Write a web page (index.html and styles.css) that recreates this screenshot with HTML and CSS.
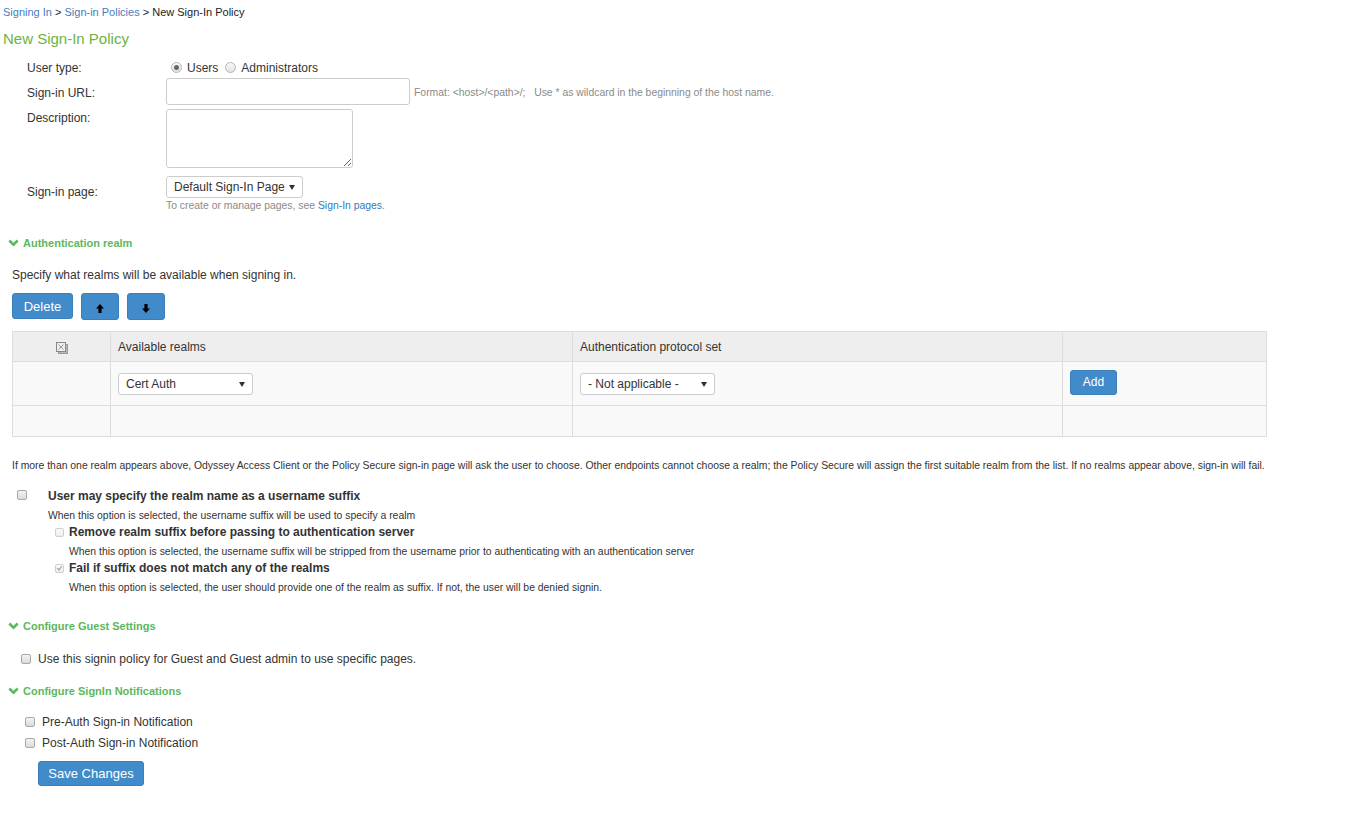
FILE: index.html
```html
<!DOCTYPE html>
<html lang="en">
<head>
    <meta charset="UTF-8">
    <title>New Sign-In Policy</title>
    <link rel="stylesheet" href="styles.css">
</head>
<body>
    <div class="breadcrumb">
        <a href="#">Signing In</a> &gt; <a href="#">Sign-in Policies</a> &gt; New Sign-In Policy
    </div>

    <h1 class="page-title">New Sign-In Policy</h1>

    <div class="policy-form">
        <div class="form-row row-type">
            <div class="form-label">User type:</div>
            <div class="form-field radios">
                <label><span class="radio checked"></span>Users</label>
                <label><span class="radio"></span>Administrators</label>
            </div>
        </div>
        <div class="form-row row-url">
            <div class="form-label">Sign-in URL:</div>
            <div class="form-field inline">
                <input type="text" class="text-input url-input">
                <span class="hint">Format: &lt;host&gt;/&lt;path&gt;/;&nbsp;&nbsp; Use * as wildcard in the beginning of the host name.</span>
            </div>
        </div>
        <div class="form-row row-desc">
            <div class="form-label">Description:</div>
            <div class="form-field">
                <textarea class="text-input desc-input"></textarea>
            </div>
        </div>
        <div class="form-row row-page">
            <div class="form-label">Sign-in page:</div>
            <div class="form-field">
                <div class="select-box page-select">Default Sign-In Page</div>
                <div class="hint page-hint">To create or manage pages, see <a href="#">Sign-In pages</a>.</div>
            </div>
        </div>
    </div>

    <div class="section-head realm-head">
        <svg class="chevron" width="11" height="8" viewBox="0 0 11 8"><polyline points="1.3,1.5 5.5,5.7 9.7,1.5" fill="none" stroke="#5cb85c" stroke-width="2.6"/></svg>
        Authentication realm
    </div>

    <p class="realm-intro">Specify what realms will be available when signing in.</p>

    <div class="toolbar">
        <button class="btn btn-delete">Delete</button>
        <button class="btn btn-arrow">
            <svg width="8" height="9" viewBox="0 0 8 9"><path d="M4 0 L8 4.5 H5.6 V9 H2.4 V4.5 H0 Z" fill="#000"/></svg>
        </button>
        <button class="btn btn-arrow">
            <svg width="8" height="9" viewBox="0 0 8 9"><path d="M4 9 L8 4.5 H5.6 V0 H2.4 V4.5 H0 Z" fill="#000"/></svg>
        </button>
    </div>

    <table class="realm-table">
        <tr class="head-row">
            <th class="col-check">
                <svg width="12" height="12" viewBox="0 0 12 12">
                    <rect x="2.5" y="2.5" width="9" height="9" fill="#bbb" stroke="#999"/>
                    <rect x="0.5" y="0.5" width="9" height="9" fill="#eee" stroke="#888"/>
                    <path d="M2.5 2.5 L7.5 7.5 M7.5 2.5 L2.5 7.5" stroke="#999" stroke-width="1"/>
                </svg>
            </th>
            <th class="col-realm">Available realms</th>
            <th class="col-proto">Authentication protocol set</th>
            <th class="col-add"></th>
        </tr>
        <tr class="edit-row">
            <td></td>
            <td><div class="select-box realm-select">Cert Auth</div></td>
            <td><div class="select-box proto-select">- Not applicable -</div></td>
            <td><button class="btn btn-add">Add</button></td>
        </tr>
        <tr class="empty-row">
            <td></td><td></td><td></td><td></td>
        </tr>
    </table>

    <p class="realm-note">If more than one realm appears above, Odyssey Access Client or the Policy Secure sign-in page will ask the user to choose. Other endpoints cannot choose a realm; the Policy Secure will assign the first suitable realm from the list. If no realms appear above, sign-in will fail.</p>

    <div class="suffix-options">
        <div class="option main-option">
            <span class="checkbox"></span>
            <div class="option-text">
                <div class="option-title">User may specify the realm name as a username suffix</div>
                <div class="option-help">When this option is selected, the username suffix will be used to specify a realm</div>
            </div>
        </div>
        <div class="option sub-option">
            <span class="checkbox disabled"></span>
            <div class="option-text">
                <div class="option-title">Remove realm suffix before passing to authentication server</div>
                <div class="option-help">When this option is selected, the username suffix will be stripped from the username prior to authenticating with an authentication server</div>
            </div>
        </div>
        <div class="option sub-option">
            <span class="checkbox disabled checked"></span>
            <div class="option-text">
                <div class="option-title">Fail if suffix does not match any of the realms</div>
                <div class="option-help">When this option is selected, the user should provide one of the realm as suffix. If not, the user will be denied signin.</div>
            </div>
        </div>
    </div>

    <div class="section-head guest-head">
        <svg class="chevron" width="11" height="8" viewBox="0 0 11 8"><polyline points="1.3,1.5 5.5,5.7 9.7,1.5" fill="none" stroke="#5cb85c" stroke-width="2.6"/></svg>
        Configure Guest Settings
    </div>

    <label class="check-line guest-line"><span class="checkbox"></span>Use this signin policy for Guest and Guest admin to use specific pages.</label>

    <div class="section-head notify-head">
        <svg class="chevron" width="11" height="8" viewBox="0 0 11 8"><polyline points="1.3,1.5 5.5,5.7 9.7,1.5" fill="none" stroke="#5cb85c" stroke-width="2.6"/></svg>
        Configure SignIn Notifications
    </div>

    <div class="notify-list">
        <label class="check-line"><span class="checkbox"></span>Pre-Auth Sign-in Notification</label>
        <label class="check-line"><span class="checkbox"></span>Post-Auth Sign-in Notification</label>
    </div>

    <button class="btn btn-save">Save Changes</button>
</body>
</html>
```

FILE: styles.css
```css
body {
    margin: 0;
    font-family: "Liberation Sans", Arial, sans-serif;
    font-size: 12px;
    color: #333;
    background: #fff;
}
a {
    color: #337ab7;
    text-decoration: none;
}
p {
    margin: 0;
}

.breadcrumb {
    font-size: 11px;
    padding: 6px 0 0 3px;
    height: 13px;
    color: #222;
}
.breadcrumb a {
    color: #4a7bbd;
}
.page-title {
    margin: 11px 0 0 3px;
    font-size: 15px;
    font-weight: normal;
    color: #6cb33e;
    line-height: 18px;
}

/* main form */
.policy-form {
    padding-left: 27px;
    margin-top: 9px;
}
.form-row {
    display: flex;
}
.form-label {
    width: 139px;
    flex-shrink: 0;
}
.row-type {
    height: 21px;
    align-items: center;
    margin-top: 2px;
}
.radios {
    display: flex;
    gap: 7px;
    padding-left: 5px;
}
.radios label {
    display: flex;
    align-items: center;
}
.radio {
    width: 9px;
    height: 9px;
    border: 1px solid #b5b5b5;
    border-radius: 50%;
    background: linear-gradient(#fafafa, #e2e2e2);
    margin-right: 5px;
    position: relative;
}
.radio.checked::after {
    content: "";
    position: absolute;
    left: 2px;
    top: 2px;
    width: 5px;
    height: 5px;
    border-radius: 50%;
    background: #666;
}
.row-url {
    margin-top: 0;
    align-items: flex-end;
}
.row-url .form-label {
    padding-bottom: 5px;
}
.inline {
    display: flex;
    align-items: flex-end;
}
.text-input {
    border: 1px solid #ccc;
    border-radius: 3px;
    margin: 0;
    font-family: inherit;
    box-sizing: border-box;
}
.url-input {
    width: 244px;
    height: 27px;
}
.hint {
    font-size: 10.4px;
    color: #8a8a8a;
}
.url-input + .hint {
    margin-left: 4px;
    padding-bottom: 7px;
}
.row-desc {
    margin-top: 4px;
}
.row-desc .form-label {
    padding-top: 2px;
}
.desc-input {
    width: 187px;
    height: 59px;
    resize: both;
    display: block;
}
.row-page {
    margin-top: 8px;
}
.row-page .form-label {
    padding-top: 9px;
}
.select-box {
    box-sizing: border-box;
    height: 22px;
    line-height: 20px;
    border: 1px solid #ccc;
    border-radius: 3px;
    background: #fff;
    padding: 0 0 0 7px;
    position: relative;
    color: #333;
}
.select-box::after {
    content: "";
    position: absolute;
    right: 7px;
    top: 8px;
    border-left: 3px solid transparent;
    border-right: 3px solid transparent;
    border-top: 5px solid #333;
}
.page-select {
    width: 137px;
}
.page-hint {
    margin-top: 2px;
}

/* section headers */
.section-head {
    display: flex;
    align-items: center;
    font-size: 11px;
    font-weight: bold;
    color: #5cb85c;
    padding-left: 8px;
    height: 14px;
}
.chevron {
    margin-right: 4px;
}
.realm-head {
    margin-top: 25px;
}

.realm-intro {
    margin: 18px 0 0 12px;
}
.toolbar {
    display: flex;
    gap: 8px;
    margin: 11px 0 0 12px;
}
.btn {
    background: #428bca;
    border: 1px solid #3a7fbc;
    border-radius: 3px;
    color: #fff;
    font-family: inherit;
    cursor: pointer;
    padding: 0;
}
.btn-delete {
    width: 61px;
    height: 26px;
    font-size: 13px;
}
.btn-arrow {
    width: 38px;
    height: 27px;
    display: flex;
    align-items: center;
    justify-content: center;
    padding-top: 3px;
}

/* realm table */
.realm-table {
    margin: 11px 0 0 12px;
    width: 1255px;
    border-collapse: collapse;
    table-layout: fixed;
}
.realm-table th,
.realm-table td {
    border: 1px solid #ddd;
    text-align: left;
    font-weight: normal;
    padding: 0 7px;
}
.head-row th {
    background: #eee;
    height: 29px;
}
.col-check {
    width: 83px;
    text-align: center !important;
}
.col-check svg {
    display: block;
    margin: 2px auto 0;
}
.col-realm {
    width: 447px;
}
.col-proto {
    width: 475px;
}
.edit-row td,
.empty-row td {
    background: #f9f9f9;
}
.edit-row td {
    height: 43px;
}
.empty-row td {
    height: 30px;
}
.realm-select {
    width: 135px;
}
.proto-select {
    width: 135px;
}
.btn-add {
    width: 47px;
    height: 25px;
    font-size: 12px;
    margin-top: -3px;
}

.realm-note {
    font-size: 10.4px;
    color: #333;
    margin: 23px 0 0 12px;
    white-space: nowrap;
}

/* suffix options */
.suffix-options {
    margin-top: 18px;
}
.option {
    display: flex;
}
.main-option {
    padding-left: 17px;
}
.main-option .checkbox {
    margin: 1px 21px 0 0;
}
.sub-option {
    padding-left: 55px;
    margin-top: 3px;
}
.sub-option .checkbox {
    margin: 3px 5px 0 0;
    width: 7px;
    height: 7px;
}
.option-title {
    font-weight: bold;
    font-size: 12px;
    line-height: 14px;
    color: #333;
}
.option-help {
    font-size: 10.4px;
    line-height: 12px;
    margin-top: 7px;
    color: #333;
}

.checkbox {
    display: inline-block;
    width: 8px;
    height: 8px;
    border: 1px solid #a8a8a8;
    border-radius: 2px;
    background: linear-gradient(#f4f4f4, #dadada);
    flex-shrink: 0;
    position: relative;
}
.checkbox.disabled {
    border-color: #cfcfcf;
    background: linear-gradient(#fafafa, #ececec);
}
.checkbox.checked::after {
    content: "";
    position: absolute;
    left: 2px;
    top: 0;
    width: 2px;
    height: 4px;
    border: solid #999;
    border-width: 0 1.5px 1.5px 0;
    transform: rotate(40deg);
}

.guest-head {
    margin-top: 25px;
}
.check-line {
    display: flex;
    align-items: center;
}
.check-line .checkbox {
    margin-right: 7px;
}
.guest-line {
    margin: 19px 0 0 21px;
}
.notify-head {
    margin-top: 18px;
}
.notify-list {
    margin: 17px 0 0 25px;
    display: flex;
    flex-direction: column;
    gap: 7px;
}
.notify-list .checkbox {
    margin-right: 7px;
}
.btn-save {
    margin: 11px 0 0 38px;
    width: 106px;
    height: 25px;
    font-size: 13px;
}
```
